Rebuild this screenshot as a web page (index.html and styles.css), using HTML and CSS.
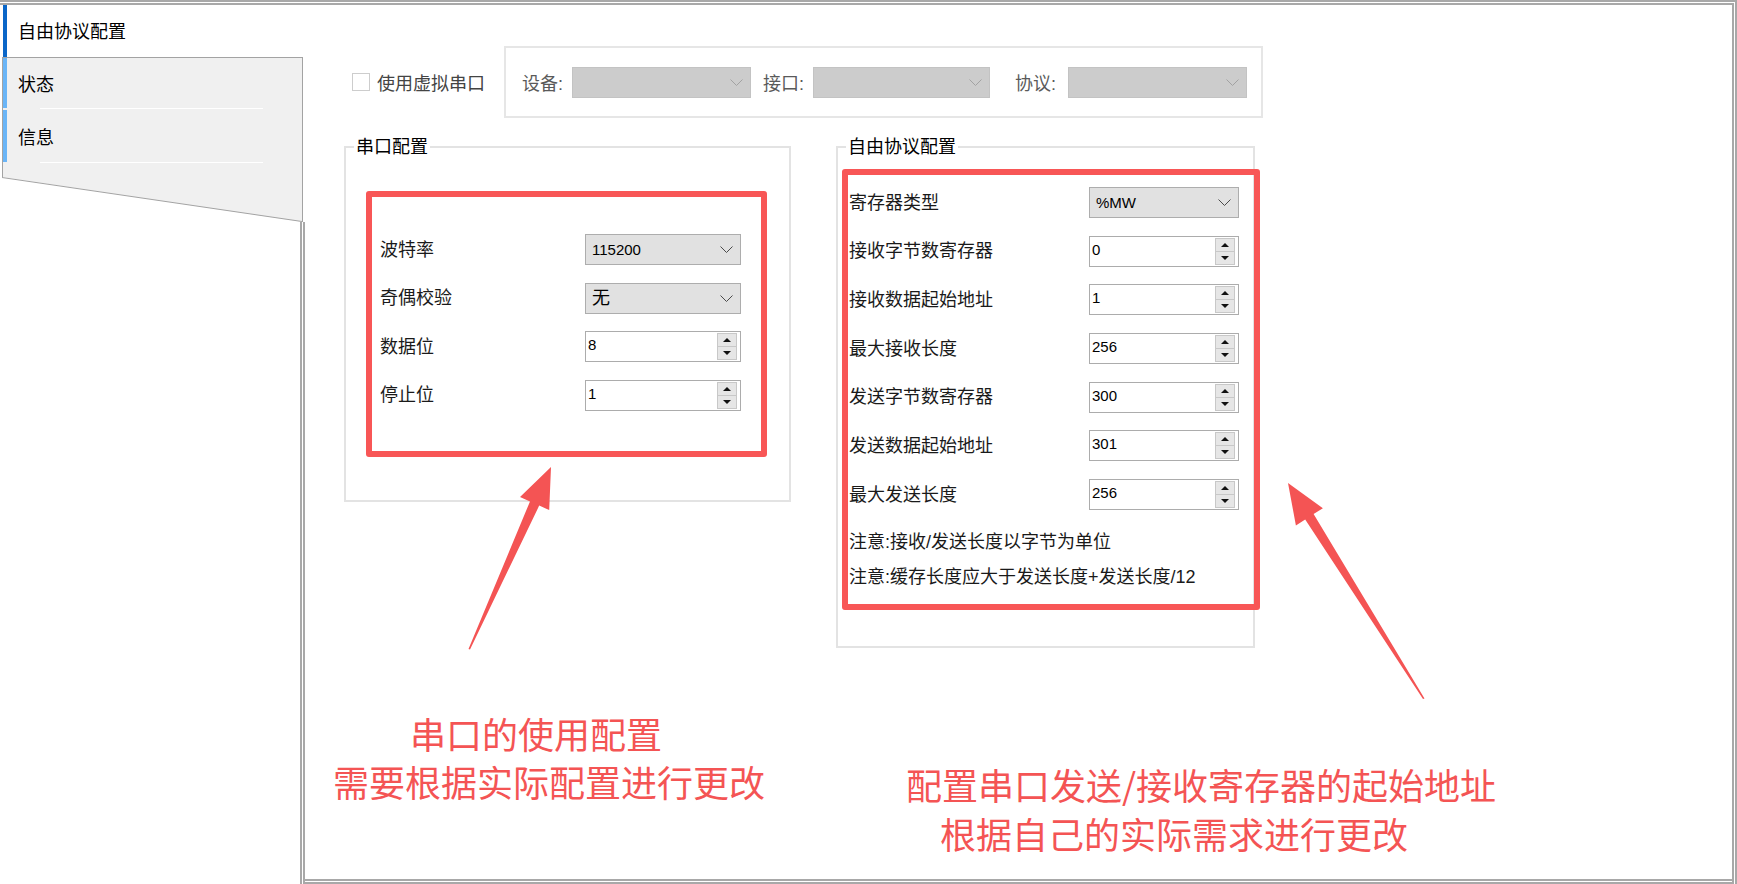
FILE: index.html
```html
<!DOCTYPE html>
<html lang="zh-CN">
<head>
  <meta charset="UTF-8">
  <title>自由协议配置</title>
  <link rel="stylesheet" href="styles.css">
</head>
<body>

<div class="window">
  <aside class="sidebar">
    <div class="tab-active">自由协议配置</div>
    <div class="tab-panel">
      <div class="tab">状态</div>
      <div class="tab-sep"></div>
      <div class="tab">信息</div>
      <div class="tab-sep"></div>
    </div>
    <svg class="tab-slant" width="301" height="45" viewBox="0 0 301 45">
      <polygon points="0,0 301,0 301,45" fill="#f0f0f0"/>
      <line x1="0" y1="0.5" x2="300" y2="44.5" stroke="#a3a3a3"/>
      <line x1="300.5" y1="0" x2="300.5" y2="45" stroke="#a3a3a3"/>
    </svg>
    <div class="sidebar-fill"></div>
  </aside>

  <main class="content">
    <div class="top-row">
      <label class="check"><span class="check-box"></span>使用虚拟串口</label>
      <div class="dev-box">
        <div class="dev-field">
          <span class="dev-label">设备:</span>
          <div class="combo off w179"><span></span><svg class="chev" width="13" height="7" viewBox="0 0 13 7"><polyline points="0.5,0.5 6.5,6.5 12.5,0.5"/></svg></div>
        </div>
        <div class="dev-field f2">
          <span class="dev-label">接口:</span>
          <div class="combo off w177"><span></span><svg class="chev" width="13" height="7" viewBox="0 0 13 7"><polyline points="0.5,0.5 6.5,6.5 12.5,0.5"/></svg></div>
        </div>
        <div class="dev-field f3">
          <span class="dev-label wide">协议:</span>
          <div class="combo off w179"><span></span><svg class="chev" width="13" height="7" viewBox="0 0 13 7"><polyline points="0.5,0.5 6.5,6.5 12.5,0.5"/></svg></div>
        </div>
      </div>
    </div>

    <div class="groups">
      <fieldset class="group group-serial">
        <legend>串口配置</legend>
        <div class="mark mark-serial">
          <div class="form-grid">
            <span>波特率</span>
            <div class="combo"><span>115200</span><svg class="chev" width="13" height="7" viewBox="0 0 13 7"><polyline points="0.5,0.5 6.5,6.5 12.5,0.5"/></svg></div>
            <span>奇偶校验</span>
            <div class="combo"><span class="cjk">无</span><svg class="chev" width="13" height="7" viewBox="0 0 13 7"><polyline points="0.5,0.5 6.5,6.5 12.5,0.5"/></svg></div>
            <span>数据位</span>
            <div class="spin"><span class="spin-val">8</span><div class="spin-btns"><i class="spin-btn up"></i><i class="spin-btn down"></i></div></div>
            <span>停止位</span>
            <div class="spin"><span class="spin-val">1</span><div class="spin-btns"><i class="spin-btn up"></i><i class="spin-btn down"></i></div></div>
          </div>
        </div>
      </fieldset>

      <fieldset class="group group-proto">
        <legend>自由协议配置</legend>
        <div class="mark mark-proto">
          <div class="form-grid">
            <span>寄存器类型</span>
            <div class="combo"><span>%MW</span><svg class="chev" width="13" height="7" viewBox="0 0 13 7"><polyline points="0.5,0.5 6.5,6.5 12.5,0.5"/></svg></div>
            <span>接收字节数寄存器</span>
            <div class="spin"><span class="spin-val">0</span><div class="spin-btns"><i class="spin-btn up"></i><i class="spin-btn down"></i></div></div>
            <span>接收数据起始地址</span>
            <div class="spin"><span class="spin-val">1</span><div class="spin-btns"><i class="spin-btn up"></i><i class="spin-btn down"></i></div></div>
            <span>最大接收长度</span>
            <div class="spin"><span class="spin-val">256</span><div class="spin-btns"><i class="spin-btn up"></i><i class="spin-btn down"></i></div></div>
            <span>发送字节数寄存器</span>
            <div class="spin"><span class="spin-val">300</span><div class="spin-btns"><i class="spin-btn up"></i><i class="spin-btn down"></i></div></div>
            <span>发送数据起始地址</span>
            <div class="spin"><span class="spin-val">301</span><div class="spin-btns"><i class="spin-btn up"></i><i class="spin-btn down"></i></div></div>
            <span>最大发送长度</span>
            <div class="spin"><span class="spin-val">256</span><div class="spin-btns"><i class="spin-btn up"></i><i class="spin-btn down"></i></div></div>
          </div>
          <p class="note">注意:接收/发送长度以字节为单位</p>
          <p class="note">注意:缓存长度应大于发送长度+发送长度/12</p>
        </div>
      </fieldset>
    </div>
  </main>
</div>

<!-- annotations drawn over the screenshot -->
<div class="callout callout-left">
  <span class="l1">串口的使用配置</span>
  <span>需要根据实际配置进行更改</span>
</div>
<div class="callout callout-right">
  <span>配置串口发送/接收寄存器的起始地址</span>
  <span class="l2">根据自己的实际需求进行更改</span>
</div>

<svg class="arrows" width="1737" height="884" viewBox="0 0 1737 884">
  <polygon points="468.5,649 530,501.4 520,497 551,467 549.2,510.1 539.2,505.6 470,649.5"/>
  <polygon points="1424.5,698.5 1313.6,514.1 1322.9,508.2 1288,483 1295.9,525.4 1305.2,519.5 1423,699"/>
</svg>

</body>
</html>
```

FILE: styles.css
```css
body {
  margin: 0;
  position: relative;
  width: 1737px;
  height: 884px;
  overflow: hidden;
  background: #fff;
  font-family: "Liberation Sans", "Noto Sans CJK SC", sans-serif;
  font-size: 18px;
  color: #1a1a1a;
}
.window {
  box-sizing: border-box;
  width: 1737px;
  height: 884px;
  display: flex;
  border-top: 5px double #a8a8a8;
  border-right: 5px double #a8a8a8;
}

/* left tabs */
.sidebar {
  flex: none;
  width: 305px;
  display: flex;
  flex-direction: column;
}
.tab-active {
  height: 52px;
  margin-left: 3px;
  padding: 0 0 2px 11px;
  box-sizing: border-box;
  border-left: 4px solid #0a66c8;
  display: flex;
  align-items: center;
  color: #000;
}
.tab-panel {
  box-sizing: border-box;
  height: 120px;
  width: 301px;
  margin-left: 2px;
  background: #f0f0f0;
  border: 1px solid #a3a3a3;
  border-bottom: none;
}
.tab {
  height: 50px;
  border-left: 4px solid #6ab5f7;
  padding-left: 11px;
  display: flex;
  align-items: center;
  color: #000;
}
.tab + .tab-sep + .tab {
  height: 52px;
}
.tab-sep {
  height: 1px;
  width: 223px;
  margin-left: 37px;
  border-top: 1px solid #fff;
}
.tab-slant {
  display: block;
  margin-left: 2px;
}
.sidebar-fill {
  flex: 1;
  border-right: 5px double #a8a8a8;
}

/* right side */
.content {
  flex: 1;
  border-bottom: 5px double #a8a8a8;
  padding: 41px 0 0 39px;
}
.top-row {
  display: flex;
  align-items: center;
}
.check {
  display: flex;
  align-items: center;
  gap: 7px;
  margin-left: 8px;
  color: #444;
}
.check-box {
  box-sizing: border-box;
  width: 18px;
  height: 18px;
  border: 1px solid #cdcdcd;
  background: #fff;
}
.dev-box {
  box-sizing: border-box;
  height: 72px;
  margin-left: 19px;
  padding: 0 14px 0 16px;
  border: 2px solid #e6e6e6;
  display: flex;
  align-items: center;
}
.dev-field {
  display: flex;
  align-items: center;
}
.dev-field.f2 {
  margin-left: 12px;
}
.dev-field.f3 {
  margin-left: 25px;
}
.dev-label {
  width: 50px;
  color: #5a5a5a;
}
.dev-label.wide {
  width: 53px;
}
.w179 { width: 179px; }
.w177 { width: 177px; }

.combo {
  box-sizing: border-box;
  height: 31px;
  display: flex;
  align-items: center;
  justify-content: space-between;
  padding: 0 7px 0 6px;
  background: #e1e1e1;
  border: 1px solid #adadad;
  font-size: 15px;
  color: #000;
}
.combo .cjk {
  font-size: 18px;
}
.chev {
  fill: none;
  stroke: #4a4a4a;
  stroke-width: 1;
}
.combo.off {
  background: #cccccc;
  border-color: #c3c3c3;
}
.combo.off .chev {
  stroke: #a2a2a2;
}

.spin {
  box-sizing: border-box;
  height: 31px;
  display: flex;
  background: #fff;
  border: 1px solid #acacac;
}
.spin-val {
  flex: 1;
  padding: 1px 0 0 2px;
  font-size: 15px;
  line-height: 24px;
  color: #000;
}
.spin-btns {
  width: 20px;
  margin: 1px 3px 1px 0;
  display: flex;
  flex-direction: column;
}
.spin-btn {
  flex: 1;
  display: flex;
  align-items: center;
  justify-content: center;
  background: #e6e6e6;
  border: 1px solid #c8c8c8;
}
.spin-btn.down {
  border-top: none;
}
.spin-btn::before {
  content: "";
  border-left: 4px solid transparent;
  border-right: 4px solid transparent;
}
.spin-btn.up::before {
  border-bottom: 4px solid #111;
}
.spin-btn.down::before {
  border-top: 4px solid #111;
}

/* group boxes */
.groups {
  display: flex;
  align-items: flex-start;
  gap: 45px;
  margin-top: 17px;
}
.group {
  box-sizing: border-box;
  margin: 0;
  padding: 0;
  min-width: 0;
  border: 2px solid #e3e3e3;
}
.group legend {
  margin-left: 8px;
  padding: 0 2px;
  line-height: 24px;
  color: #000;
}
.group-serial {
  width: 447px;
}
.group-proto {
  width: 419px;
}
.mark {
  border: 6px solid #f85656;
  border-radius: 3px;
}
.mark-serial {
  margin: 32px 22px 43px 20px;
  padding: 37px 20px 40px 8px;
}
.mark-proto {
  margin: 10px -7px 36px 4px;
  padding: 12px 15px 15px 1px;
}
.form-grid {
  display: grid;
  grid-template-columns: 1fr 156px;
  row-gap: 17.5px;
  align-items: center;
  line-height: 24px;
}
.mark-proto .form-grid {
  grid-template-columns: 1fr 150px;
  row-gap: 17.7px;
}
.note {
  margin: 20px 0 0;
  line-height: 24px;
  color: #1a1a1a;
}
.note + .note {
  margin-top: 11px;
}

/* annotations */
.callout {
  position: absolute;
  font-family: "Noto Sans CJK SC", sans-serif;
  font-size: 36px;
  color: #f45454;
}
.callout span {
  display: block;
}
.callout-left {
  left: 333px;
  top: 709px;
  line-height: 48px;
}
.callout-left .l1 {
  padding-left: 77px;
}
.callout-right {
  left: 906px;
  top: 760px;
  line-height: 49px;
}
.callout-right .l2 {
  padding-left: 34px;
}
.arrows {
  position: absolute;
  left: 0;
  top: 0;
  pointer-events: none;
  fill: #f45454;
}
```
